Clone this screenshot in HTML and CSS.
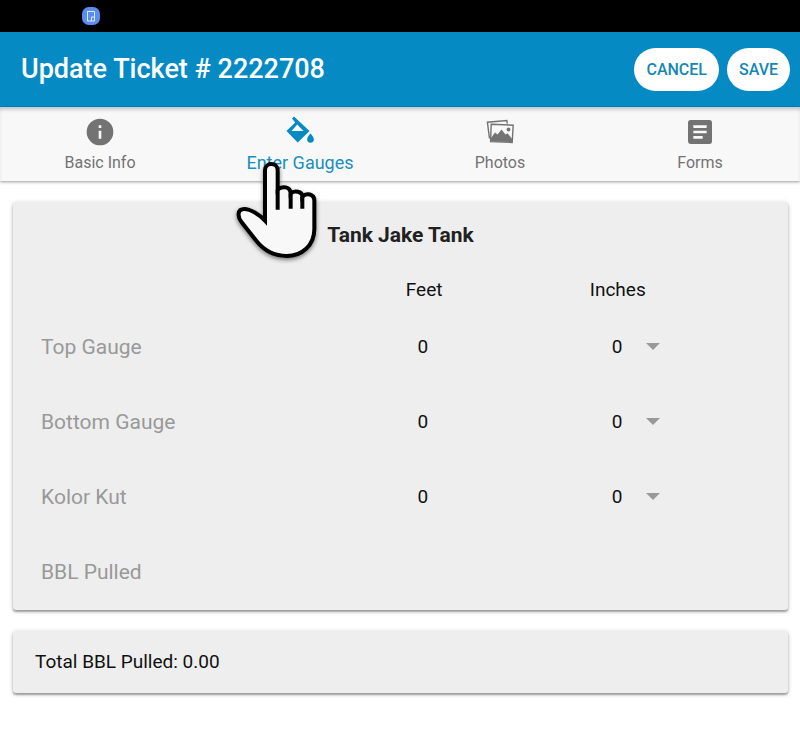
FILE: index.html
```html
<!DOCTYPE html>
<html lang="en">

<head>
    <meta charset="UTF-8">
    <meta name="viewport" content="width=device-width, initial-scale=1">
    <title>Update Ticket</title>
    <link rel="stylesheet" href="styles.css">
</head>

<body>
    <div class="status-bar">
        <svg width="18" height="18" viewBox="0 0 18 18">
            <rect width="18" height="18" rx="7" fill="#5b8def" />
            <path d="M5.500 4v10h4M5.500 4.500h7V14h-3v-4h3" fill="none" stroke="#dfe9ff" stroke-width="1" />
        </svg>
    </div>

    <header class="header">
        <h1>Update Ticket # 2222708</h1>
        <button type="button">CANCEL</button>
        <button type="button">SAVE</button>
    </header>

    <nav class="tabs">
        <a href="#info">
            <svg width="32" height="32" viewBox="0 0 24 24">
                <path d="M12 2a10 10 0 1 0 0 20 10 10 0 0 0 0-20zm1 15h-2v-6h2v6zm0-8h-2V7h2v2z" />
            </svg>
            <span>Basic Info</span>
        </a>
        <a href="#gauges" class="active">
            <svg width="32" height="32" viewBox="0 1 32 32">
                <path fill-rule="evenodd" d="M10 1.500l-2 2 3.200 4L2.500 16l11.200 11.500L25.500 16zM13.200 9.500l6.300 6.500H7.500z" />
                <path d="M26.500 18.500s-3.400 3.700-3.400 5.800a3.400 3.400 0 0 0 6.800 0c0-2.100-3.400-5.800-3.400-5.800z" />
            </svg>
            <span>Enter Gauges</span>
        </a>
        <a href="#photos">
            <svg width="32" height="32" viewBox="0 0 32 32">
                <path d="M5.500 22.500L3.400 6.200l19.500-1.600.4 3" fill="none" stroke="#737373" stroke-width="1.400" />
                <path d="M7.200 8.200l22 1-1 17.300-21.600-.9z" fill="none" stroke="#737373" stroke-width="1.400" />
                <path d="M7 25.500V22l4-5.500 2.500 2 4-5 4 5 2-1.300 5 6.300v2.500z" />
                <circle cx="24.500" cy="13.500" r="1.900" />
            </svg>
            <span>Photos</span>
        </a>
        <a href="#forms">
            <svg width="32" height="32" viewBox="0 0 24 24">
                <path d="M19 3H5a2 2 0 0 0-2 2v14c0 1.100.9 2 2 2h14a2 2 0 0 0 2-2V5a2 2 0 0 0-2-2zm-5 14H7v-2h7v2zm3-4H7v-2h10v2zm0-4H7V7h10v2z" />
            </svg>
            <span>Forms</span>
        </a>
    </nav>

    <main>
        <section class="card">
            <h2>Tank Jake Tank</h2>
            <table class="gauges">
                <thead>
                    <tr>
                        <td class="name"></td>
                        <th class="feet" id="feet">Feet</th>
                        <th class="inches" id="inches">Inches</th>
                    </tr>
                </thead>
                <tbody>
                    <tr>
                        <th id="top">Top Gauge</th>
                        <td class="feet"><input type="text" value="0" aria-labelledby="top feet"></td>
                        <td class="inches"><select aria-labelledby="top inches"><option>0</option></select></td>
                    </tr>
                    <tr>
                        <th id="bottom">Bottom Gauge</th>
                        <td class="feet"><input type="text" value="0" aria-labelledby="bottom feet"></td>
                        <td class="inches"><select aria-labelledby="bottom inches"><option>0</option></select></td>
                    </tr>
                    <tr>
                        <th id="kolor">Kolor Kut</th>
                        <td class="feet"><input type="text" value="0" aria-labelledby="kolor feet"></td>
                        <td class="inches"><select aria-labelledby="kolor inches"><option>0</option></select></td>
                    </tr>
                    <tr>
                        <th>BBL Pulled</th>
                        <td></td>
                        <td></td>
                    </tr>
                </tbody>
            </table>
        </section>

        <section class="card total">Total BBL Pulled: 0.00</section>
    </main>

    <!-- hand pointing at the active tab -->
    <svg class="pointer" width="85" height="102" viewBox="30 156 255 306">
        <path d="M120 338V187c0-25 38-25 38 0v58c12-12 39-10 39 12 10-10 35-8 35 9 12-13 36-8 36 12v85c0 50-38 81-83 81-38 0-68-17-90-44l-45-57c-13-16-14-40 8-40 18 0 45 17 62 35z" fill="#f8f8f8" stroke="#000" stroke-width="12" />
        <path d="M158 245v60M197 256v46M232 266v36" fill="none" stroke="#000" stroke-width="12" />
    </svg>
</body>

</html>
```
FILE: styles.css
```css
* {
    margin: 0;
    padding: 0;
    box-sizing: border-box;
}

body {
    background: #fff;
    color: #111;
    font-family: Roboto, sans-serif;
    font-size: 19px;
}

.status-bar {
    height: 32px;
    padding: 7px 82px;
    background: #000;
}

.status-bar svg {
    display: block;
}

.header {
    display: flex;
    align-items: center;
    gap: 8px;
    height: 75px;
    padding: 0 10px 0 21px;
    background: #068ac4;
}

.header h1 {
    flex: 1;
    color: #fff;
    font-size: 27px;
    font-weight: 500;
    line-height: 32px;
    padding-bottom: 2px;
}

.header button {
    height: 43px;
    padding: 0 12px;
    border: 0;
    border-radius: 22px;
    background: #fff;
    color: #1686b4;
    font-family: inherit;
    font-size: 16px;
    font-weight: 500;
    cursor: pointer;
}

.tabs {
    display: flex;
    height: 74px;
    background: #f8f8f8;
    box-shadow: inset 0 4px 4px -2px rgba(0, 0, 0, 0.25), 0 1px 3px rgba(0, 0, 0, 0.4);
}

.tabs a {
    flex: 1;
    display: flex;
    flex-direction: column;
    align-items: center;
    padding-top: 9px;
    color: #737373;
    fill: #737373;
    font-size: 16px;
    line-height: 30px;
    text-decoration: none;
}

.tabs .active {
    color: #1a8fc1;
    fill: #068ac4;
    font-size: 18px;
}

main {
    display: flex;
    flex-direction: column;
    gap: 21px;
    padding: 21px 12px 21px 13px;
}

.card {
    border-radius: 3px;
    background: #eee;
    box-shadow: 0 2px 2px rgba(0, 0, 0, 0.3), 0 1px 5px rgba(0, 0, 0, 0.2);
}

.card h2 {
    color: #212121;
    font-size: 21px;
    font-weight: 700;
    line-height: 67px;
    text-align: center;
}

.gauges {
    width: 100%;
    margin-bottom: 1px;
    table-layout: fixed;
    border-collapse: collapse;
}

.gauges th {
    font-weight: 400;
    text-align: left;
}

.gauges thead tr {
    height: 40px;
}

.gauges tbody tr {
    height: 75px;
}

.gauges tbody th {
    padding-left: 28px;
    color: #999;
    font-size: 21px;
}

.gauges .name {
    width: 49%;
}

.gauges .feet {
    width: 24%;
    padding-left: 13px;
}

.gauges .inches {
    padding-left: 11px;
}

.gauges input,
.gauges select {
    height: 40px;
    border: 0;
    background: transparent;
    color: #111;
    font-family: inherit;
    font-size: 19px;
}

.gauges input {
    width: 34px;
    text-align: center;
}

.gauges select {
    width: 70px;
    padding-left: 22px;
    appearance: none;
    background: url("data:image/svg+xml,%3Csvg xmlns='http://www.w3.org/2000/svg' width='14' height='7'%3E%3Cpath d='M0 0h14l-7 7z' fill='%23999'/%3E%3C/svg%3E") no-repeat right center;
}

.total {
    padding: 0 22px;
    line-height: 62px;
}

/* lies over the tabs and the first card */
.pointer {
    position: absolute;
    top: 160px;
    left: 235px;
    overflow: visible;
    filter: drop-shadow(0 2px 2px rgba(0, 0, 0, 0.5));
    pointer-events: none;
}
```
